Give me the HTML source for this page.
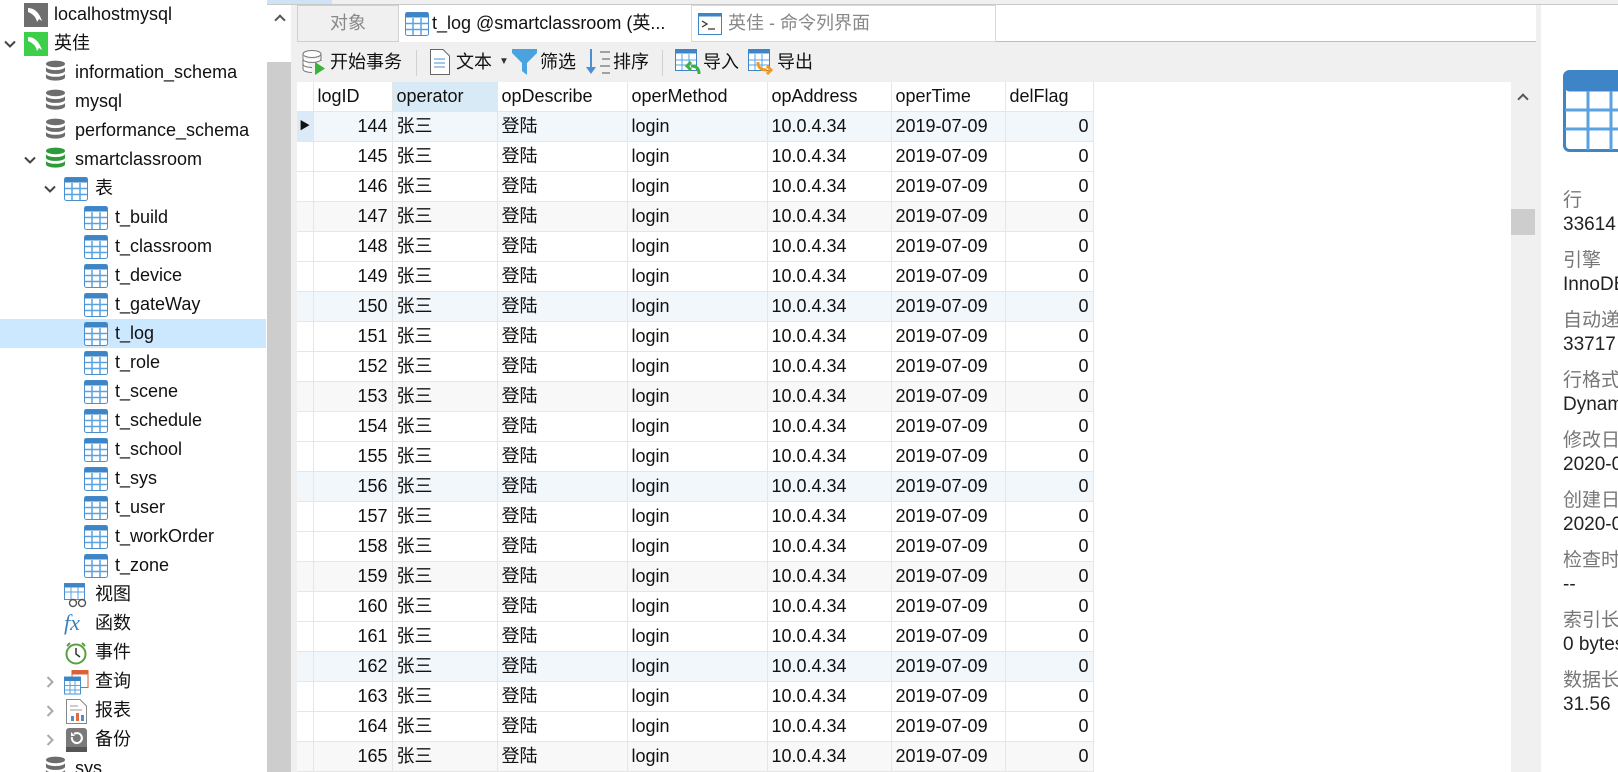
<!DOCTYPE html>
<html><head><meta charset="utf-8">
<style>
*{margin:0;padding:0;box-sizing:border-box}
html,body{overflow:hidden}
body{width:1618px;height:772px;background:#f0f0f0;font-family:"Liberation Sans","Noto Sans CJK SC",sans-serif;font-size:18px;color:#111;position:relative}
.a{position:absolute}
.side{left:0;top:0;width:267px;height:772px;background:#fff;overflow:hidden}
.it{position:absolute;height:29px;line-height:29px;white-space:nowrap}
.it svg{position:absolute;top:3px}
.sel{background:#cce8ff}
table{border-collapse:collapse;table-layout:fixed}
td{height:30px;border-right:1px solid #e6e6e6;border-bottom:1px solid #e6e6e6;padding:0 4px;white-space:nowrap;overflow:hidden;font-size:18px;line-height:29px}
td.n{text-align:right}
td.ind{background:#fff;padding:0}
tr.b td{background:#f2f7fc}
tr.g td{background:#f8f8f8}
thead td{background:#fff}
.tb{position:absolute;top:42px;height:40px;line-height:40px;font-size:18px}
.lbl{position:absolute;left:1563px;color:#777;font-size:19px;white-space:nowrap}
.val{position:absolute;left:1563px;color:#222;font-size:19px;white-space:nowrap}
</style></head><body>
<svg width="0" height="0" style="position:absolute"><defs>
<symbol id="tbl" viewBox="0 0 24 24"><rect x="0.5" y="0.5" width="23" height="23" rx="2" fill="#fff" stroke="#4a90d0"/><rect x="0.5" y="0.5" width="23" height="5" fill="#3d85c6"/><path d="M1 11.5H23M1 17.5H23M8 6V23M16 6V23" stroke="#5aa2e0" stroke-width="1.5"/></symbol>
<symbol id="db" viewBox="0 0 22 26"><g fill="#6d6d6d"><ellipse cx="11" cy="4" rx="10" ry="3.5"/><path d="M1 7c0 2 4.5 3.5 10 3.5S21 9 21 7v4c0 2-4.5 3.5-10 3.5S1 13 1 11z"/><path d="M1 14c0 2 4.5 3.5 10 3.5S21 16 21 14v4c0 2-4.5 3.5-10 3.5S1 20 1 18z"/></g></symbol>
<symbol id="dbg" viewBox="0 0 22 26"><g fill="#2e9a3a"><ellipse cx="11" cy="4" rx="10" ry="3.5"/><path d="M1 7c0 2 4.5 3.5 10 3.5S21 9 21 7v4c0 2-4.5 3.5-10 3.5S1 13 1 11z"/><path d="M1 14c0 2 4.5 3.5 10 3.5S21 16 21 14v4c0 2-4.5 3.5-10 3.5S1 20 1 18z"/></g></symbol>
<symbol id="cd" viewBox="0 0 14 14"><path d="M2 4.5L7 9.5L12 4.5" stroke="#444" stroke-width="2" fill="none"/></symbol>
<symbol id="cr" viewBox="0 0 14 14"><path d="M4.5 2L9.5 7L4.5 12" stroke="#aaa" stroke-width="2" fill="none"/></symbol>
</defs></svg>

<!-- top strip -->
<div class="a" style="left:0;top:0;width:1618px;height:5px;background:#f0f0f0;border-bottom:1px solid #c8c8c8"></div>
<div class="a" style="left:240px;top:0;width:92px;height:4px;background:#cfe3f5"></div>

<!-- sidebar -->
<div class="a side">
<div class="it" style="left:24px;top:0px"><svg width="24" height="24" viewBox="0 0 24 24"><rect width="24" height="24" fill="#6e6e6e"/><path d="M4 5c6 0 11 4 14 13l-3-2-2 3c-1-5-4-8-9-10z" fill="#fff"/></svg><span style="position:absolute;left:30px">localhostmysql</span></div>
<div class="it" style="left:0;top:29px"><svg style="left:3px;top:8px" width="14" height="14"><use href="#cd"/></svg><svg style="left:24px" width="24" height="24" viewBox="0 0 24 24"><rect width="24" height="24" fill="#3ecf4a"/><path d="M4 5c6 0 11 4 14 13l-3-2-2 3c-1-5-4-8-9-10z" fill="#fff"/></svg><span style="position:absolute;left:54px">英佳</span></div>
<div class="it" style="left:45px;top:58px"><svg width="21" height="25" style="top:2px"><use href="#db"/></svg><span style="position:absolute;left:30px">information_schema</span></div>
<div class="it" style="left:45px;top:87px"><svg width="21" height="25" style="top:2px"><use href="#db"/></svg><span style="position:absolute;left:30px">mysql</span></div>
<div class="it" style="left:45px;top:116px"><svg width="21" height="25" style="top:2px"><use href="#db"/></svg><span style="position:absolute;left:30px">performance_schema</span></div>
<div class="it" style="left:0;top:145px"><svg style="left:23px;top:8px" width="14" height="14"><use href="#cd"/></svg><svg width="21" height="25" style="left:45px;top:2px"><use href="#dbg"/></svg><span style="position:absolute;left:75px">smartclassroom</span></div>
<div class="it" style="left:0;top:174px"><svg style="left:43px;top:8px" width="14" height="14"><use href="#cd"/></svg><svg width="24" height="24" style="left:64px"><use href="#tbl"/></svg><span style="position:absolute;left:95px">表</span></div>
<div class="it" style="left:84px;top:203px"><svg width="24" height="24"><use href="#tbl"/></svg><span style="position:absolute;left:31px">t_build</span></div>
<div class="it" style="left:84px;top:232px"><svg width="24" height="24"><use href="#tbl"/></svg><span style="position:absolute;left:31px">t_classroom</span></div>
<div class="it" style="left:84px;top:261px"><svg width="24" height="24"><use href="#tbl"/></svg><span style="position:absolute;left:31px">t_device</span></div>
<div class="it" style="left:84px;top:290px"><svg width="24" height="24"><use href="#tbl"/></svg><span style="position:absolute;left:31px">t_gateWay</span></div>
<div class="it sel" style="left:0;width:266px;top:319px"><svg width="24" height="24" style="left:84px"><use href="#tbl"/></svg><span style="position:absolute;left:115px">t_log</span></div>
<div class="it" style="left:84px;top:348px"><svg width="24" height="24"><use href="#tbl"/></svg><span style="position:absolute;left:31px">t_role</span></div>
<div class="it" style="left:84px;top:377px"><svg width="24" height="24"><use href="#tbl"/></svg><span style="position:absolute;left:31px">t_scene</span></div>
<div class="it" style="left:84px;top:406px"><svg width="24" height="24"><use href="#tbl"/></svg><span style="position:absolute;left:31px">t_schedule</span></div>
<div class="it" style="left:84px;top:435px"><svg width="24" height="24"><use href="#tbl"/></svg><span style="position:absolute;left:31px">t_school</span></div>
<div class="it" style="left:84px;top:464px"><svg width="24" height="24"><use href="#tbl"/></svg><span style="position:absolute;left:31px">t_sys</span></div>
<div class="it" style="left:84px;top:493px"><svg width="24" height="24"><use href="#tbl"/></svg><span style="position:absolute;left:31px">t_user</span></div>
<div class="it" style="left:84px;top:522px"><svg width="24" height="24"><use href="#tbl"/></svg><span style="position:absolute;left:31px">t_workOrder</span></div>
<div class="it" style="left:84px;top:551px"><svg width="24" height="24"><use href="#tbl"/></svg><span style="position:absolute;left:31px">t_zone</span></div>
<div class="it" style="left:64px;top:580px"><svg width="25" height="25" viewBox="0 0 25 25"><rect x="0.5" y="0.5" width="20" height="16" fill="#fff" stroke="#4a90d0"/><rect x="0.5" y="0.5" width="20" height="4" fill="#3d85c6"/><path d="M1 9H20M7 4V16M14 4V16" stroke="#5aa2e0"/><circle cx="9" cy="20" r="3.5" fill="#fff" stroke="#555" stroke-width="1.4"/><circle cx="18" cy="20" r="3.5" fill="#fff" stroke="#555" stroke-width="1.4"/></svg><span style="position:absolute;left:31px">视图</span></div>
<div class="it" style="left:64px;top:609px"><span style="position:absolute;left:0;top:-1px;font-family:'Liberation Serif',serif;font-style:italic;color:#3a7fc0;font-size:22px">fx</span><span style="position:absolute;left:31px">函数</span></div>
<div class="it" style="left:64px;top:638px"><svg width="24" height="24" viewBox="0 0 24 24"><circle cx="12" cy="13" r="9.5" fill="#fff" stroke="#5aa040" stroke-width="2"/><path d="M12 7V13L16 16" stroke="#333" stroke-width="1.5" fill="none"/><path d="M3 5l3-3M21 5l-3-3" stroke="#5aa040" stroke-width="2"/></svg><span style="position:absolute;left:31px">事件</span></div>
<div class="it" style="left:0;top:667px"><svg style="left:43px;top:8px" width="14" height="14"><use href="#cr"/></svg><svg width="25" height="25" style="left:64px" viewBox="0 0 25 25"><rect x="8" y="0.5" width="16" height="17" fill="#fff" stroke="#d9613a"/><rect x="8" y="0.5" width="16" height="4" fill="#d9613a"/><rect x="0.5" y="7" width="16" height="17" fill="#fff" stroke="#4a90d0"/><rect x="0.5" y="7" width="16" height="4" fill="#3d85c6"/><path d="M1 15.5H16M1 20H16M6 11V24M11 11V24" stroke="#5aa2e0"/></svg><span style="position:absolute;left:95px">查询</span></div>
<div class="it" style="left:0;top:696px"><svg style="left:43px;top:8px" width="14" height="14"><use href="#cr"/></svg><svg width="22" height="25" style="left:66px" viewBox="0 0 22 25"><path d="M0.5 0.5H14L20.5 7V24.5H0.5Z" fill="#fff" stroke="#888"/><path d="M4 7H12M4 11H16" stroke="#999"/><rect x="5" y="17" width="3" height="5" fill="#4a90d0"/><rect x="10" y="14" width="3" height="8" fill="#e86a3a"/><rect x="15" y="16" width="3" height="6" fill="#4a90d0"/></svg><span style="position:absolute;left:95px">报表</span></div>
<div class="it" style="left:0;top:725px"><svg style="left:43px;top:8px" width="14" height="14"><use href="#cr"/></svg><svg width="21" height="24" style="left:66px" viewBox="0 0 21 24"><rect width="21" height="24" rx="3" fill="#7a7a7a"/><rect y="19" width="21" height="5" fill="#555"/><path d="M6 9a5 5 0 1 0 2-3" stroke="#fff" stroke-width="2" fill="none"/><path d="M5 4V8H9" fill="#fff"/></svg><span style="position:absolute;left:95px">备份</span></div>
<div class="it" style="left:45px;top:754px"><svg width="21" height="25" style="top:2px"><use href="#db"/></svg><span style="position:absolute;left:30px">sys</span></div>
</div>
<!-- sidebar scrollbar -->
<div class="a" style="left:267px;top:5px;width:24px;height:57px;background:#fff"></div>
<div class="a" style="border-left:2px solid #555;border-top:2px solid #555;transform:rotate(45deg);top:16px;width:8px;height:8px;left:276px"></div>
<div class="a" style="left:267px;top:62px;width:24px;height:710px;background:#cdcdcd"></div>

<!-- tab bar -->
<div class="a" style="left:297px;top:5px;width:1239px;height:37px;background:#fff;border-bottom:1px solid #bdbdbd"></div>
<div class="a" style="left:297px;top:5px;width:102px;height:37px;background:#f0f0f0;border:1px solid #d0d0d0;color:#888;text-align:center;line-height:35px">对象</div>
<div class="a" style="left:399px;top:5px;width:292px;height:37px;background:#fff;line-height:37px;white-space:nowrap"><svg width="24" height="24" style="position:absolute;left:6px;top:7px"><use href="#tbl"/></svg><span style="position:absolute;left:33px">t_log @smartclassroom (英...</span></div>
<div class="a" style="left:691px;top:5px;width:305px;height:37px;background:#fff;border:1px solid #d8d8d8;line-height:35px;color:#888;white-space:nowrap"><svg width="24" height="22" viewBox="0 0 24 22" style="position:absolute;left:6px;top:7px"><rect x="0.5" y="0.5" width="23" height="21" fill="#fff" stroke="#3d85c6"/><rect x="0.5" y="0.5" width="23" height="3" fill="#3d85c6"/><path d="M4 8l5 3-5 3M10 16H17" stroke="#333" fill="none" stroke-width="1.3"/></svg><span style="position:absolute;left:36px">英佳 - 命令列界面</span></div>

<!-- toolbar -->
<div class="tb" style="left:302px"><svg width="24" height="26" viewBox="0 0 24 26" style="position:absolute;top:7px"><g fill="#fff" stroke="#777"><ellipse cx="10" cy="5" rx="9" ry="3.5"/><path d="M1 5V20c0 2 4 3.5 9 3.5"/><path d="M19 5V12"/><path d="M1 10c0 2 4 3.5 9 3.5s9-1.5 9-3.5M1 15c0 2 4 3.5 9 3.5"/></g><path d="M13 13L23 19.5L13 26Z" fill="#3bb33b"/></svg></div>
<div class="tb" style="left:330px">开始事务</div>
<div class="a" style="left:416px;top:50px;width:1px;height:26px;background:#d0d0d0"></div>
<div class="tb" style="left:430px"><svg width="20" height="26" viewBox="0 0 20 26" style="position:absolute;top:7px"><path d="M0.5 0.5H13L19.5 7V25.5H0.5Z" fill="#fff" stroke="#666"/><path d="M4 10H15M4 14H15M4 18H15" stroke="#4a90d0"/></svg></div>
<div class="tb" style="left:456px">文本</div>
<div class="tb" style="left:499px;font-size:10px;color:#333">▼</div>
<div class="tb" style="left:512px"><svg width="25" height="26" viewBox="0 0 25 26" style="position:absolute;top:7px"><path d="M0 0H25V4L15 14V26L10 22V14L0 4Z" fill="#4aa3df"/></svg></div>
<div class="tb" style="left:540px">筛选</div>
<div class="tb" style="left:586px"><svg width="26" height="26" viewBox="0 0 26 26" style="position:absolute;top:7px"><path d="M5 0V22" stroke="#4a90d0" stroke-width="2"/><path d="M0 18L5 25L10 18Z" fill="#4a90d0"/><path d="M14 3H24M16 10H24M14 17H24M16 24H24" stroke="#555"/></svg></div>
<div class="tb" style="left:613px">排序</div>
<div class="a" style="left:662px;top:50px;width:1px;height:26px;background:#d0d0d0"></div>
<div class="tb" style="left:675px"><svg width="26" height="26" viewBox="0 0 26 26" style="position:absolute;top:7px"><rect x="0.5" y="0.5" width="21" height="21" fill="#fff" stroke="#3d85c6"/><rect x="0.5" y="0.5" width="21" height="4" fill="#3d85c6"/><path d="M1 11H21M1 16H21M7 5V21M14 5V21" stroke="#5aa2e0"/><path d="M24 25c0-6-3-8-8-8M16 13l-4 4 4 4" stroke="#3bb33b" stroke-width="3" fill="none"/></svg></div>
<div class="tb" style="left:703px">导入</div>
<div class="tb" style="left:748px"><svg width="26" height="26" viewBox="0 0 26 26" style="position:absolute;top:7px"><rect x="0.5" y="0.5" width="21" height="21" fill="#fff" stroke="#3d85c6"/><rect x="0.5" y="0.5" width="21" height="4" fill="#3d85c6"/><path d="M1 11H21M1 16H21M7 5V21M14 5V21" stroke="#5aa2e0"/><path d="M10 13c0 6 3 8 9 8M19 17l4 4-4 4" stroke="#f39a1e" stroke-width="3" fill="none"/></svg></div>
<div class="tb" style="left:777px">导出</div>

<!-- grid -->
<div class="a" style="left:297px;top:82px;width:1214px;height:690px;background:#fff"></div>
<div class="a" style="left:297px;top:82px">
<table>
<colgroup><col style="width:16px"><col style="width:79px"><col style="width:105px"><col style="width:130px"><col style="width:140px"><col style="width:124px"><col style="width:114px"><col style="width:88px"></colgroup>
<thead><tr><td class="ind" style="height:28px"></td><td style="height:28px">logID</td><td style="height:28px;background:#d9eaf7">operator</td><td style="height:28px">opDescribe</td><td style="height:28px">operMethod</td><td style="height:28px">opAddress</td><td style="height:28px">operTime</td><td style="height:28px">delFlag</td></tr></thead>
<tbody>
<tr class="b"><td class="ind" style="background:#dce9f6;font-size:11px;text-align:center">▶</td><td class="n">144</td><td>张三</td><td>登陆</td><td>login</td><td>10.0.4.34</td><td>2019-07-09</td><td class="n">0</td></tr>
<tr><td class="ind"></td><td class="n">145</td><td>张三</td><td>登陆</td><td>login</td><td>10.0.4.34</td><td>2019-07-09</td><td class="n">0</td></tr>
<tr><td class="ind"></td><td class="n">146</td><td>张三</td><td>登陆</td><td>login</td><td>10.0.4.34</td><td>2019-07-09</td><td class="n">0</td></tr>
<tr class="g"><td class="ind"></td><td class="n">147</td><td>张三</td><td>登陆</td><td>login</td><td>10.0.4.34</td><td>2019-07-09</td><td class="n">0</td></tr>
<tr><td class="ind"></td><td class="n">148</td><td>张三</td><td>登陆</td><td>login</td><td>10.0.4.34</td><td>2019-07-09</td><td class="n">0</td></tr>
<tr><td class="ind"></td><td class="n">149</td><td>张三</td><td>登陆</td><td>login</td><td>10.0.4.34</td><td>2019-07-09</td><td class="n">0</td></tr>
<tr class="b"><td class="ind"></td><td class="n">150</td><td>张三</td><td>登陆</td><td>login</td><td>10.0.4.34</td><td>2019-07-09</td><td class="n">0</td></tr>
<tr><td class="ind"></td><td class="n">151</td><td>张三</td><td>登陆</td><td>login</td><td>10.0.4.34</td><td>2019-07-09</td><td class="n">0</td></tr>
<tr><td class="ind"></td><td class="n">152</td><td>张三</td><td>登陆</td><td>login</td><td>10.0.4.34</td><td>2019-07-09</td><td class="n">0</td></tr>
<tr class="g"><td class="ind"></td><td class="n">153</td><td>张三</td><td>登陆</td><td>login</td><td>10.0.4.34</td><td>2019-07-09</td><td class="n">0</td></tr>
<tr><td class="ind"></td><td class="n">154</td><td>张三</td><td>登陆</td><td>login</td><td>10.0.4.34</td><td>2019-07-09</td><td class="n">0</td></tr>
<tr><td class="ind"></td><td class="n">155</td><td>张三</td><td>登陆</td><td>login</td><td>10.0.4.34</td><td>2019-07-09</td><td class="n">0</td></tr>
<tr class="b"><td class="ind"></td><td class="n">156</td><td>张三</td><td>登陆</td><td>login</td><td>10.0.4.34</td><td>2019-07-09</td><td class="n">0</td></tr>
<tr><td class="ind"></td><td class="n">157</td><td>张三</td><td>登陆</td><td>login</td><td>10.0.4.34</td><td>2019-07-09</td><td class="n">0</td></tr>
<tr><td class="ind"></td><td class="n">158</td><td>张三</td><td>登陆</td><td>login</td><td>10.0.4.34</td><td>2019-07-09</td><td class="n">0</td></tr>
<tr class="g"><td class="ind"></td><td class="n">159</td><td>张三</td><td>登陆</td><td>login</td><td>10.0.4.34</td><td>2019-07-09</td><td class="n">0</td></tr>
<tr><td class="ind"></td><td class="n">160</td><td>张三</td><td>登陆</td><td>login</td><td>10.0.4.34</td><td>2019-07-09</td><td class="n">0</td></tr>
<tr><td class="ind"></td><td class="n">161</td><td>张三</td><td>登陆</td><td>login</td><td>10.0.4.34</td><td>2019-07-09</td><td class="n">0</td></tr>
<tr class="b"><td class="ind"></td><td class="n">162</td><td>张三</td><td>登陆</td><td>login</td><td>10.0.4.34</td><td>2019-07-09</td><td class="n">0</td></tr>
<tr><td class="ind"></td><td class="n">163</td><td>张三</td><td>登陆</td><td>login</td><td>10.0.4.34</td><td>2019-07-09</td><td class="n">0</td></tr>
<tr><td class="ind"></td><td class="n">164</td><td>张三</td><td>登陆</td><td>login</td><td>10.0.4.34</td><td>2019-07-09</td><td class="n">0</td></tr>
<tr class="g"><td class="ind"></td><td class="n">165</td><td>张三</td><td>登陆</td><td>login</td><td>10.0.4.34</td><td>2019-07-09</td><td class="n">0</td></tr>
</tbody></table>
</div>
<!-- grid vscroll -->
<div class="a" style="left:1511px;top:82px;width:25px;height:690px;background:#f0f0f0"></div>
<div class="a" style="left:1519px;top:95px;width:8px;height:8px;border-left:2px solid #555;border-top:2px solid #555;transform:rotate(45deg)"></div>
<div class="a" style="left:1511px;top:209px;width:24px;height:26px;background:#cdcdcd"></div>

<!-- right panel -->
<div class="a" style="left:1541px;top:5px;width:77px;height:767px;background:#fff;overflow:hidden">
<svg style="position:absolute;left:22px;top:65px" width="55" height="82" viewBox="0 0 55 82"><rect x="1.5" y="1.5" width="70" height="79" rx="5" fill="#fff" stroke="#3d85c6" stroke-width="3"/><rect x="1.5" y="1.5" width="70" height="20" rx="5" fill="#3d85c6"/><path d="M2 40H60M2 59H60M25 21V80M48 21V80" stroke="#5aa2e0" stroke-width="3"/></svg>
</div>
<div class="lbl" style="top:185px">行</div><div class="val" style="top:214px">33614</div>
<div class="lbl" style="top:245px">引擎</div><div class="val" style="top:274px">InnoDB</div>
<div class="lbl" style="top:305px">自动递</div><div class="val" style="top:334px">33717</div>
<div class="lbl" style="top:365px">行格式</div><div class="val" style="top:394px">Dynamic</div>
<div class="lbl" style="top:425px">修改日</div><div class="val" style="top:454px">2020-0</div>
<div class="lbl" style="top:485px">创建日</div><div class="val" style="top:514px">2020-0</div>
<div class="lbl" style="top:545px">检查时</div><div class="val" style="top:574px">--</div>
<div class="lbl" style="top:605px">索引长</div><div class="val" style="top:634px">0 bytes</div>
<div class="lbl" style="top:665px">数据长</div><div class="val" style="top:694px">31.56</div>
</body></html>
